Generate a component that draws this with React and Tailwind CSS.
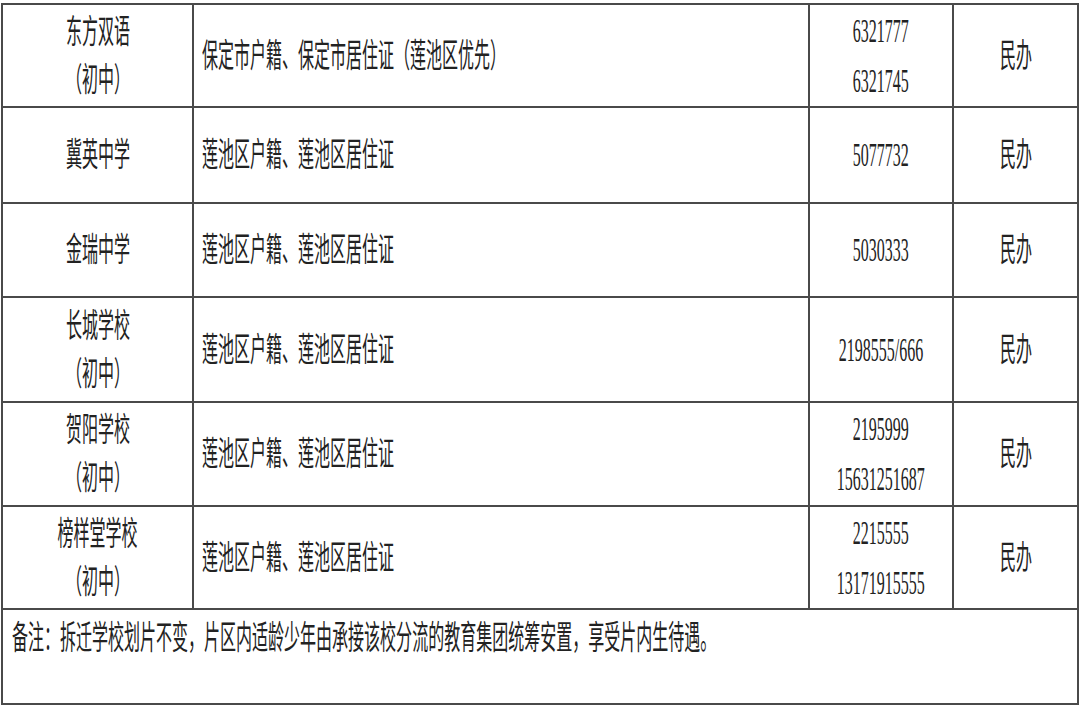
import React from 'react';

const rows = [
    { name: ['东方双语', '（初中）'], area: '保定市户籍、保定市居住证（莲池区优先）', phone: ['6321777', '6321745'], type: '民办' },
    { name: ['冀英中学'], area: '莲池区户籍、莲池区居住证', phone: ['5077732'], type: '民办' },
    { name: ['金瑞中学'], area: '莲池区户籍、莲池区居住证', phone: ['5030333'], type: '民办' },
    { name: ['长城学校', '（初中）'], area: '莲池区户籍、莲池区居住证', phone: ['2198555/666'], type: '民办' },
    { name: ['贺阳学校', '（初中）'], area: '莲池区户籍、莲池区居住证', phone: ['2195999', '15631251687'], type: '民办' },
    { name: ['榜样堂学校', '（初中）'], area: '莲池区户籍、莲池区居住证', phone: ['2215555', '13171915555'], type: '民办' },
];

// text in the source is squeezed sideways, so every line is scaled on x
const Line = ({ children, left }) => (
    <div className={`whitespace-nowrap scale-x-[0.485] ${left ? 'origin-left' : 'origin-center'}`}>
        {children}
    </div>
);

const cell = 'border-r-2 border-b-2 border-[#4a4a4a]';

const App = () => {
    return (
        <div
            className="w-[1080px] h-[709px] bg-white pt-[3px] pl-[1px] text-[33px] text-[#222]"
            style={{ fontFamily: '"Liberation Serif", "Noto Sans CJK SC", serif' }}
        >
            <div className="grid w-[1078px] grid-cols-[191px_616px_144px_125px] grid-rows-[103px_96px_94px_105px_104px_103px_95px] border-t-2 border-l-2 border-[#4a4a4a]">
                {rows.map((r, i) => (
                    <React.Fragment key={i}>
                        {/* school name */}
                        <div className={`${cell} flex flex-col items-center justify-center leading-[48px]`}>
                            {r.name.map((n) => (
                                <Line key={n}>{n}</Line>
                            ))}
                        </div>

                        {/* enrolment area */}
                        <div className={`${cell} flex flex-col justify-center pl-[8px] leading-[48px]`}>
                            <Line left>{r.area}</Line>
                        </div>

                        {/* phone */}
                        <div className={`${cell} flex flex-col items-center justify-center leading-[50px]`}>
                            {r.phone.map((p) => (
                                <Line key={p}>{p}</Line>
                            ))}
                        </div>

                        {/* school type */}
                        <div className={`${cell} flex flex-col items-center justify-center leading-[48px]`}>
                            <Line>{r.type}</Line>
                        </div>
                    </React.Fragment>
                ))}

                {/* note */}
                <div className={`${cell} col-span-4 pl-[9px] pt-[8px] leading-[40px]`}>
                    <Line left>备注：拆迁学校划片不变，片区内适龄少年由承接该校分流的教育集团统筹安置，享受片内生待遇。</Line>
                </div>
            </div>
        </div>
    );
};

export default App;
